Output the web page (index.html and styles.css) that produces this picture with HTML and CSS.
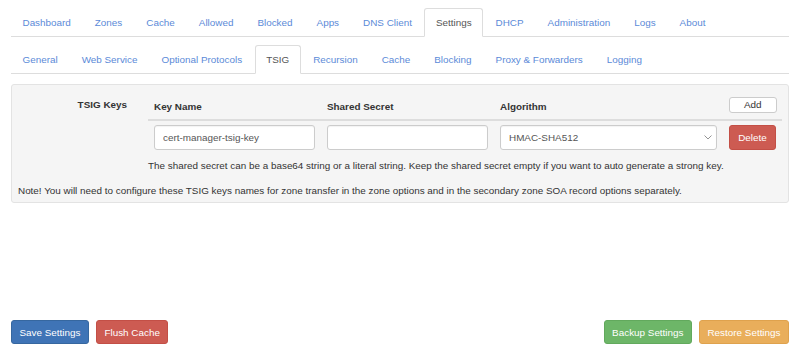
FILE: index.html
```html
<!DOCTYPE html>
<html lang="en">
<head>
  <meta charset="UTF-8">
  <title>Settings - TSIG</title>
  <link rel="stylesheet" href="styles.css">
</head>
<body>

<div class="page">
  <!-- Main Tabs -->
  <ul class="nav-tabs main-tabs">
    <li><a href="#">Dashboard</a></li>
    <li><a href="#">Zones</a></li>
    <li><a href="#">Cache</a></li>
    <li><a href="#">Allowed</a></li>
    <li><a href="#">Blocked</a></li>
    <li><a href="#">Apps</a></li>
    <li><a href="#">DNS Client</a></li>
    <li class="active"><a href="#">Settings</a></li>
    <li><a href="#">DHCP</a></li>
    <li><a href="#">Administration</a></li>
    <li><a href="#">Logs</a></li>
    <li><a href="#">About</a></li>
  </ul>

  <!-- Settings Tabs -->
  <ul class="nav-tabs sub-tabs">
    <li><a href="#">General</a></li>
    <li><a href="#">Web Service</a></li>
    <li><a href="#">Optional Protocols</a></li>
    <li class="active"><a href="#">TSIG</a></li>
    <li><a href="#">Recursion</a></li>
    <li><a href="#">Cache</a></li>
    <li><a href="#">Blocking</a></li>
    <li><a href="#">Proxy &amp; Forwarders</a></li>
    <li><a href="#">Logging</a></li>
  </ul>

  <!-- TSIG Keys -->
  <div class="well">
    <div class="form-row">
      <label class="row-label">TSIG Keys</label>
      <div class="row-body">
        <table class="keys-table">
          <colgroup>
            <col class="col-name">
            <col class="col-secret">
            <col class="col-algo">
            <col>
          </colgroup>
          <thead>
            <tr>
              <th>Key Name</th>
              <th>Shared Secret</th>
              <th>Algorithm</th>
              <th class="col-action"><button class="btn btn-default btn-xs">Add</button></th>
            </tr>
          </thead>
          <tbody>
            <tr>
              <td><input class="form-control" type="text" value="cert-manager-tsig-key"></td>
              <td><input class="form-control" type="text" value=""></td>
              <td>
                <div class="select-wrap">
                  <select class="form-control">
                    <option>HMAC-SHA512</option>
                  </select>
                  <svg class="caret" width="8" height="5" viewBox="0 0 8 5"><path d="M0.5 0.5 L4 4 L7.5 0.5" fill="none" stroke="#888" stroke-width="0.9"/></svg>
                </div>
              </td>
              <td><button class="btn btn-danger btn-sm">Delete</button></td>
            </tr>
          </tbody>
        </table>
        <div class="help-text">The shared secret can be a base64 string or a literal string. Keep the shared secret empty if you want to auto generate a strong key.</div>
      </div>
    </div>
    <div class="note">Note! You will need to configure these TSIG keys names for zone transfer in the zone options and in the secondary zone SOA record options separately.</div>
  </div>

  <!-- Footer Buttons -->
  <div class="footer">
    <div class="btn-group">
      <button class="btn btn-primary">Save Settings</button>
      <button class="btn btn-danger">Flush Cache</button>
    </div>
    <div class="btn-group">
      <button class="btn btn-success">Backup Settings</button>
      <button class="btn btn-warning">Restore Settings</button>
    </div>
  </div>
</div>

</body>
</html>
```

FILE: styles.css
```css
/* Global */
html, body {
  margin: 0;
  height: 100%;
  font-family: "Liberation Sans", Arial, sans-serif;
  font-size: 9.9px;
  color: #333;
  background: #fff;
}

.page {
  box-sizing: border-box;
  min-height: 100vh;
  padding: 8px 11px 10px;
  display: flex;
  flex-direction: column;
}

/* Tabs */
.nav-tabs {
  list-style: none;
  margin: 0;
  padding: 0;
  display: flex;
  border-bottom: 1px solid #ddd;
}

.nav-tabs li {
  margin-right: 1px;
  margin-bottom: -1px;
}

.nav-tabs a {
  display: block;
  padding: 0 10.5px;
  line-height: 27px;
  color: #5b8ad8;
  text-decoration: none;
  border: 1px solid transparent;
  border-radius: 3px 3px 0 0;
}

.nav-tabs li.active a {
  color: #555;
  background: #fff;
  border-color: #ddd #ddd transparent;
}

.sub-tabs {
  margin-top: 8px;
}

/* Well */
.well {
  margin-top: 10px;
  background: #f5f5f5;
  border: 1px solid #e3e3e3;
  border-radius: 3px;
  padding: 12px 6px 5px;
}

.form-row {
  display: grid;
  grid-template-columns: 109px 1fr;
  column-gap: 21px;
}

.row-label {
  text-align: right;
  font-weight: bold;
  padding-top: 1px;
  line-height: 13px;
}

/* Table */
.keys-table {
  width: 100%;
  table-layout: fixed;
  border-collapse: collapse;
}

.col-name, .col-secret { width: 173px; }
.col-algo { width: 229px; }

.keys-table th {
  text-align: left;
  font-weight: bold;
  padding: 0 6px 6px;
  line-height: 13px;
  border-bottom: 2px solid #ddd;
  vertical-align: bottom;
}

.keys-table td {
  padding: 4px 6px 0;
}

.keys-table th.col-action { text-align: right; }

.form-control {
  box-sizing: border-box;
  width: 100%;
  height: 25px;
  padding: 0 8px;
  font-family: inherit;
  font-size: 9.9px;
  color: #555;
  background: #fff;
  border: 1px solid #ccc;
  border-radius: 3px;
  box-shadow: inset 0 1px 1px rgba(0, 0, 0, 0.05);
}

.select-wrap {
  position: relative;
}

select.form-control {
  appearance: none;
  -webkit-appearance: none;
}

.caret {
  position: absolute;
  right: 5px;
  top: 10px;
}

.help-text {
  margin-top: 9px;
  line-height: 13px;
}

.note {
  margin-top: 12px;
  line-height: 13px;
}

/* Buttons */
.btn {
  font-family: inherit;
  font-size: 9.9px;
  height: 24px;
  padding: 0 7.5px;
  color: #fff;
  border: 1px solid transparent;
  border-radius: 3px;
  cursor: pointer;
}

.btn-xs {
  height: 16px;
  padding: 0 14px;
  line-height: 14px;
}

.btn-sm {
  height: 25px;
  width: 47px;
  padding: 0;
}

.btn-default { background: #fff; color: #333; border-color: #ccc; }
.btn-primary { background: #3f74b6; border-color: #36679f; }
.btn-danger  { background: #cd5b52; border-color: #c34f46; }
.btn-success { background: #6db668; border-color: #62a95d; }
.btn-warning { background: #e9ae5b; border-color: #dfa24d; }

.footer {
  margin-top: auto;
  display: flex;
  justify-content: space-between;
}

.btn-group {
  display: flex;
  gap: 7px;
}
```
